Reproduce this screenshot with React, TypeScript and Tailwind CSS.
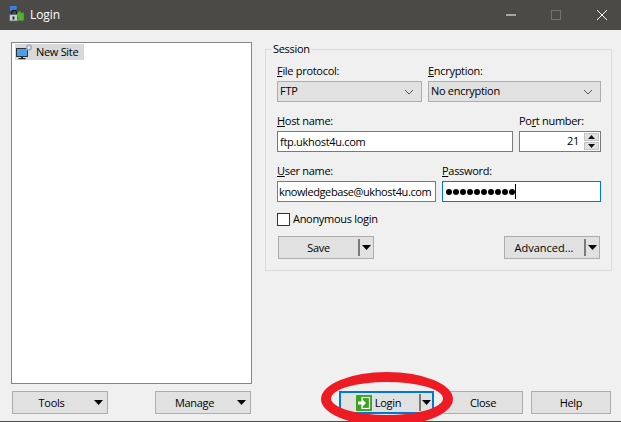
import React from "react";

const Caret = () => (
  <svg width="9" height="5" viewBox="0 0 9 5" className="block"><path d="M0 0H9L4.5 5Z" fill="#000" /></svg>
);
const Chevron = () => (
  <svg width="10" height="6" viewBox="0 0 10 6" className="block"><path d="M1 1L5 5L9 1" fill="none" stroke="#555" strokeWidth="1" /></svg>
);

function Label({ u, rest, className = "" }: { u: string; rest: string; className?: string }) {
  return (
    <div className={"h-[18px] leading-[16px] " + className}>
      <span className="underline">{u}</span>
      {rest}
    </div>
  );
}

function Select({ text, w }: { text: string; w: string }) {
  return (
    <div className={w + " h-[21px] border-[1px] border-[#adadad] bg-[#e1e1e1] flex items-center justify-between pl-[2px] pr-[7px]"}>
      <span>{text}</span>
      <Chevron />
    </div>
  );
}

function Btn({ children, className = "" }: { children: React.ReactNode; className?: string }) {
  return (
    <div className={"h-[23px] border border-[#adadad] bg-[#e1e1e1] flex items-center justify-center pt-[2px] " + className}>{children}</div>
  );
}

function SplitBtn({ label, w, className = "", labelClass = "" }: { label: string; w: string; className?: string; labelClass?: string }) {
  return (
    <div className={w + " h-[23px] border border-[#adadad] bg-[#e1e1e1] flex items-center " + className}>
      <span className={"flex-1 text-center pt-[2px] " + labelClass}>{label}</span>
      <span className="w-[2px] h-[17px] bg-[#7a7a7a]" />
      <span className="w-[13px] flex justify-center"><Caret /></span>
    </div>
  );
}

function MenuBtn({ label, w }: { label: string; w: string }) {
  return (
    <div className={w + " h-[23px] border border-[#adadad] bg-[#e1e1e1] flex items-center"}>
      <span className="w-[77px] text-center pt-[2px]">{label}</span>
      <span className="ml-[4px]"><Caret /></span>
    </div>
  );
}

export default function App() {
  return (
    <div className="relative w-[621px] h-[422px] overflow-hidden bg-[#f0f0f0] text-[11px] tracking-[-0.3px] text-black font-['Open_Sans','Noto_Sans',sans-serif] flex flex-col">
      {/* Title bar */}
      <div className="h-[30px] bg-[#4c4a46] flex items-center pl-[9px] shrink-0">
        <svg width="16" height="16" viewBox="0 0 16 16" className="block mt-[-2px]">
          <path d="M1 0H7.5L8 2.5L6.5 3.5L9 6L7 7.5L4.5 5L3 6.5L1 4.5Z" fill="#3d7fe0" />
          <path d="M2.5 8.5V7A2.5 2.5 0 0 1 7.5 7V8.5" fill="none" stroke="#1d1d1d" strokeWidth="1.5" />
          <rect x="0.5" y="8.5" width="8" height="6.5" fill="#c9cfd8" stroke="#5a6270" strokeWidth=".8" />
          <rect x="3.6" y="10.5" width="1.8" height="3" fill="#222" />
          <path d="M9 6.5L11 5L13 7.5L14.8 6V14.5H7.5L9.5 12.5L7.8 8.5Z" fill="#4fb52a" />
        </svg>
        <span className="ml-[5px] text-white text-[12px] tracking-[-0.1px]">Login</span>
        <div className="ml-auto flex items-center">
          <svg width="10" height="10" viewBox="0 0 10 10" className="mr-[35px]"><path d="M0 5H10" stroke="#fff" /></svg>
          <svg width="10" height="10" viewBox="0 0 10 10" className="mr-[36px]"><rect x=".5" y=".5" width="9" height="9" fill="none" stroke="#73726e" /></svg>
          <svg width="10" height="10" viewBox="0 0 10 10" className="mr-[14px]"><path d="M0 0L10 10M10 0L0 10" stroke="#fff" /></svg>
        </div>
      </div>

      {/* Body */}
      <div className="flex-1 flex pt-[12px] pl-[11px] min-h-0">
        {/* Left column */}
        <div className="w-[241px] shrink-0 flex flex-col">
          <div className="h-[342px] border border-[#828790] bg-white p-[1px] pl-[3px]">
            <div className="w-[69px] h-[16px] bg-[#d9d9d9] flex items-center whitespace-nowrap">
              <svg width="18" height="16" viewBox="0 0 18 16" className="block shrink-0">
                <rect x="1.5" y="4.5" width="11" height="8" fill="#4aa0ea" stroke="#2f3338" />
                <rect x="6" y="13" width="2" height="1" fill="#222" />
                <rect x="3.5" y="14" width="7" height="1.2" fill="#222" />
                <circle cx="14" cy="3.5" r="2.4" fill="#dfe6f0" stroke="#9aa6ba" strokeWidth="1.4" />
              </svg>
              <span className="ml-[3px] leading-[16px]">New Site</span>
            </div>
          </div>
          <div className="mt-[7px] flex justify-between px-px">
            <MenuBtn label="Tools" w="w-[96px]" />
            <MenuBtn label="Manage" w="w-[96px]" />
          </div>
        </div>

        {/* Right column */}
        <div className="ml-[13px] w-[347px] shrink-0 flex flex-col">
          <div className="relative mt-[7px] h-[222px] border border-[#dcdcdc] pl-[11px] pr-[10px] pt-[13px]">
            <span className="absolute left-[6px] top-[-9px] leading-[15px] bg-[#f0f0f0] px-px">Session</span>
            <div className="flex gap-[6px]">
              <div>
                <Label u="F" rest="ile protocol:" />
                <Select text="FTP" w="w-[145px]" />
              </div>
              <div>
                <Label u="E" rest="ncryption:" />
                <Select text="No encryption" w="w-[173px]" />
              </div>
            </div>
            <div className="flex gap-[6px] mt-[11px]">
              <div>
                <Label u="H" rest="ost name:" />
                <div className="w-[236px] h-[21px] border border-[#7a7a7a] bg-white pl-[2px] leading-[19px]">ftp.ukhost4u.com</div>
              </div>
              <div>
                <div className="h-[18px] leading-[16px]">Po<span className="underline">r</span>t number:</div>
                <div className="w-[82px] h-[21px] border border-[#7a7a7a] bg-white flex items-center justify-end">
                  <span className="mr-[5px]">21</span>
                  <div className="w-[15px] flex flex-col gap-px mr-[1px]">
                    <div className="h-[8px] bg-[#e1e1e1] border border-[#c4c4c4] flex items-center justify-center"><svg width="7" height="4" viewBox="0 0 7 4"><path d="M0 4L3.5 0L7 4Z" fill="#111" /></svg></div>
                    <div className="h-[8px] bg-[#e1e1e1] border border-[#c4c4c4] flex items-center justify-center"><svg width="7" height="4" viewBox="0 0 7 4"><path d="M0 0L3.5 4L7 0Z" fill="#111" /></svg></div>
                  </div>
                </div>
              </div>
            </div>
            <div className="flex gap-[6px] mt-[11px]">
              <div>
                <Label u="U" rest="ser name:" />
                <div className="w-[159px] h-[21px] border border-[#7a7a7a] bg-white pl-[1px] leading-[19px] tracking-[-0.4px] whitespace-nowrap">knowledgebase@ukhost4u.com</div>
              </div>
              <div>
                <Label u="P" rest="assword:" />
                <div className="w-[159px] h-[21px] border border-[#0078d7] bg-white pl-[3px] flex items-center">
                  <span className="flex gap-[1px]">
                    {Array.from({ length: 10 }).map((_, i) => (
                      <span key={i} className="w-[6px] h-[6px] rounded-full bg-black" />
                    ))}
                  </span>
                  <span className="w-px h-[15px] bg-black" />
                </div>
              </div>
            </div>
            <div className="flex items-center mt-[11px] h-[13px]">
              <span className="w-[13px] h-[13px] border border-[#333] bg-white" />
              <span className="ml-[3px]">Anonymous login</span>
            </div>
            <div className="flex justify-between mt-[10px] pl-px pr-px">
              <SplitBtn label="Save" w="w-[96px]" />
              <SplitBtn label="Advanced..." w="w-[96px]" labelClass="tracking-[0px] pr-[1px]" />
            </div>
          </div>
          <div className="mt-auto mb-[7px] flex items-center">
            <div className="ml-[74px] w-[95px] h-[23px] border-2 border-[#0078d7] bg-[#e1e1e1] flex items-center">
              <span className="flex-1 flex items-center justify-center pr-[3px]">
                <svg width="16" height="16" viewBox="0 0 16 16" className="block mr-[3px]">
                  <rect width="16" height="16" rx="1" fill="#3ba222" />
                  <rect x="6" y="2.5" width="7.5" height="11" fill="none" stroke="#fff" strokeWidth="1.2" />
                  <path d="M2 6.5H6V4L10 8L6 12V9.5H2Z" fill="#fff" />
                </svg>
                <span className="pt-[2px]">Login</span>
              </span>
              <span className="w-[2px] h-[17px] bg-[#7a7a7a]" />
              <span className="w-[11px] flex justify-center"><Caret /></span>
            </div>
            <Btn className="ml-[9px] w-[80px]">Close</Btn>
            <Btn className="ml-[8px] w-[80px]">Help</Btn>
          </div>
        </div>
      </div>

      {/* Bottom edge */}
      <div className="h-px bg-[#4c4a46] shrink-0" />

      {/* Red annotation */}
      <svg className="absolute left-[316px] top-[366px] pointer-events-none" width="145" height="56" viewBox="0 0 145 56">
        <path fillRule="evenodd" fill="#ed1c24" d="M5 33A66 27 0 1 0 137 33A66 27 0 1 0 5 33ZM15 32.5A56 16.5 0 1 1 127 32.5A56 16.5 0 1 1 15 32.5Z" />
      </svg>
    </div>
  );
}
